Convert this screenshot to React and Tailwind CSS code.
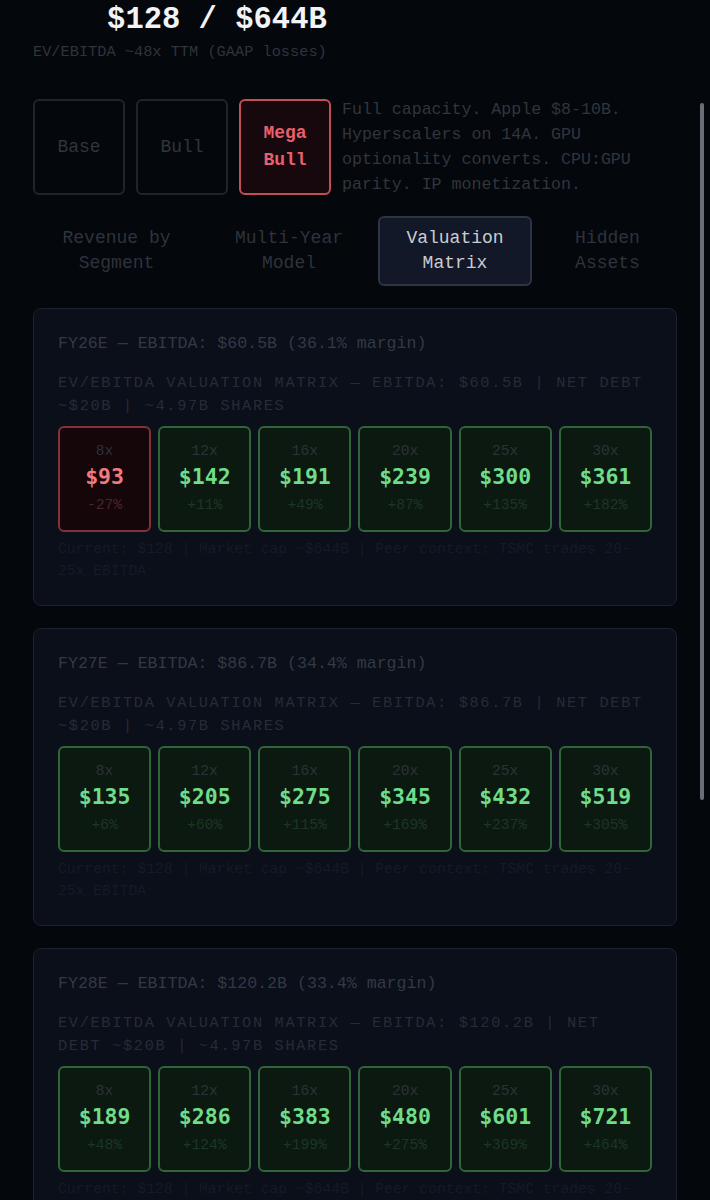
import { useState } from "react";

const MONO = "font-['Liberation_Mono','Courier_New',monospace]";
const NUM = "font-['DejaVu_Sans_Mono',Menlo,monospace]";

const scenarios = ["Base", "Bull", "Mega Bull"];
const tabs = [
  { label: "Revenue by Segment", w: "w-[167px]" },
  { label: "Multi-Year Model", w: "w-[166px]" },
  { label: "Valuation Matrix", w: "w-[154px]" },
  { label: "Hidden Assets", w: "w-[139px]" },
];
const multiples = ["8x", "12x", "16x", "20x", "25x", "30x"];

const years = [
  {
    title: "FY26E — EBITDA: $60.5B (36.1% margin)",
    ebitda: "$60.5B",
    cells: [
      ["$93", "-27%"],
      ["$142", "+11%"],
      ["$191", "+49%"],
      ["$239", "+87%"],
      ["$300", "+135%"],
      ["$361", "+182%"],
    ],
  },
  {
    title: "FY27E — EBITDA: $86.7B (34.4% margin)",
    ebitda: "$86.7B",
    cells: [
      ["$135", "+6%"],
      ["$205", "+60%"],
      ["$275", "+115%"],
      ["$345", "+169%"],
      ["$432", "+237%"],
      ["$519", "+305%"],
    ],
  },
  {
    title: "FY28E — EBITDA: $120.2B (33.4% margin)",
    ebitda: "$120.2B",
    cells: [
      ["$189", "+48%"],
      ["$286", "+124%"],
      ["$383", "+199%"],
      ["$480", "+275%"],
      ["$601", "+369%"],
      ["$721", "+464%"],
    ],
  },
];

function Cell({ mult, value, change }) {
  const down = change.startsWith("-");
  return (
    <div
      className={`h-[106px] rounded-[6px] border-2 flex flex-col items-center justify-center ${
        down ? "bg-[#140609] border-[#86303a]" : "bg-[#0c1910] border-[#306539]"
      }`}
    >
      <div className={`${MONO} text-[14.6px] leading-[20px] text-[#2d3238]`}>{mult}</div>
      <div
        className={`${NUM} font-bold text-[21.5px] leading-[31px] ${
          down ? "text-[#ef7a82]" : "text-[#6fdc8a]"
        }`}
      >
        {value}
      </div>
      <div
        className={`${MONO} text-[14.6px] leading-[26px] ${
          down ? "text-[#4c2428]" : "text-[#1c3624]"
        }`}
      >
        {change}
      </div>
    </div>
  );
}

function YearCard({ year }) {
  const header = `EV/EBITDA Valuation Matrix — EBITDA: ${year.ebitda} | Net Debt ~$20B | ~4.97B Shares`;
  return (
    <div className="rounded-[8px] border border-[#1c2230] bg-[#0a0f1a] px-6 pt-[23px] pb-[23px]">
      <div className={`${MONO} text-[16.6px] leading-[24px] text-[#333944]`}>{year.title}</div>
      <div
        className={`${MONO} mt-[16px] text-[15.3px] leading-[23px] tracking-[1.65px] text-[#262c37] uppercase`}
      >
        {header}
      </div>
      <div className="mt-[8px] grid grid-cols-6 gap-[7px]">
        {year.cells.map(([v, c], i) => (
          <Cell key={i} mult={multiples[i]} value={v} change={c} />
        ))}
      </div>
      <div className={`${MONO} mt-[6px] text-[14.7px] leading-[22px] text-[#151a26]`}>
        Current: $128 | Market cap ~$644B | Peer context: TSMC trades 20-25x EBITDA
      </div>
    </div>
  );
}

export default function App() {
  const [scenario, setScenario] = useState("Mega Bull");
  const [tab, setTab] = useState("Valuation Matrix");

  return (
    <div className={`relative min-h-[1200px] bg-[#04070c] ${MONO} px-[33px] pb-10 overflow-hidden`}>
      {/* header */}
      <div className="inline-flex flex-col items-end">
        <h1 className="text-[30.5px] leading-[36px] font-bold text-[#f2f3f5] mt-[2px]">$128 / $644B</h1>
        <div className="text-[15.3px] leading-[22px] text-[#2f343d] mt-[3px]">
          EV/EBITDA ~48x TTM (GAAP losses)
        </div>
      </div>

      {/* scenario picker */}
      <div className="mt-[34px] flex items-center">
        <div className="flex gap-[11px] shrink-0">
          {scenarios.map((s) => {
            const active = s === scenario;
            return (
              <button
                key={s}
                onClick={() => setScenario(s)}
                className={`w-[92px] h-[96px] rounded-[6px] border-2 text-[18px] leading-[27px] px-2 ${
                  active
                    ? "border-[#c24e5a] bg-[#16080c] text-[#e8606e] font-bold"
                    : "border-[#1f242e] bg-transparent text-[#30353f]"
                }`}
              >
                {s}
              </button>
            );
          })}
        </div>
        <p className="ml-[11px] text-[16.6px] leading-[25px] text-[#31353d]">
          Full capacity. Apple $8-10B. Hyperscalers on 14A. GPU optionality converts. CPU:GPU parity. IP
          monetization.
        </p>
      </div>

      {/* tabs */}
      <div className="mt-[19px] flex gap-[6px]">
        {tabs.map((t) => {
          const active = t.label === tab;
          return (
            <button
              key={t.label}
              onClick={() => setTab(t.label)}
              className={`${t.w} shrink-0 px-2 py-[8px] rounded-[6px] border-2 text-[18px] leading-[25px] text-center ${
                active
                  ? "border-[#2e3442] bg-[#121827] text-[#c9ccd3]"
                  : "border-transparent text-[#2e333d]"
              }`}
            >
              {t.label}
            </button>
          );
        })}
      </div>

      {/* cards */}
      <div className="mt-[22px] flex flex-col gap-[22px]">
        {years.map((y) => (
          <YearCard key={y.title} year={y} />
        ))}
      </div>

      {/* overlay scrollbar */}
      <div className="absolute right-[6px] top-[103px] h-[697px] w-[4px] rounded-full bg-[#6a6e77]" />
    </div>
  );
}
